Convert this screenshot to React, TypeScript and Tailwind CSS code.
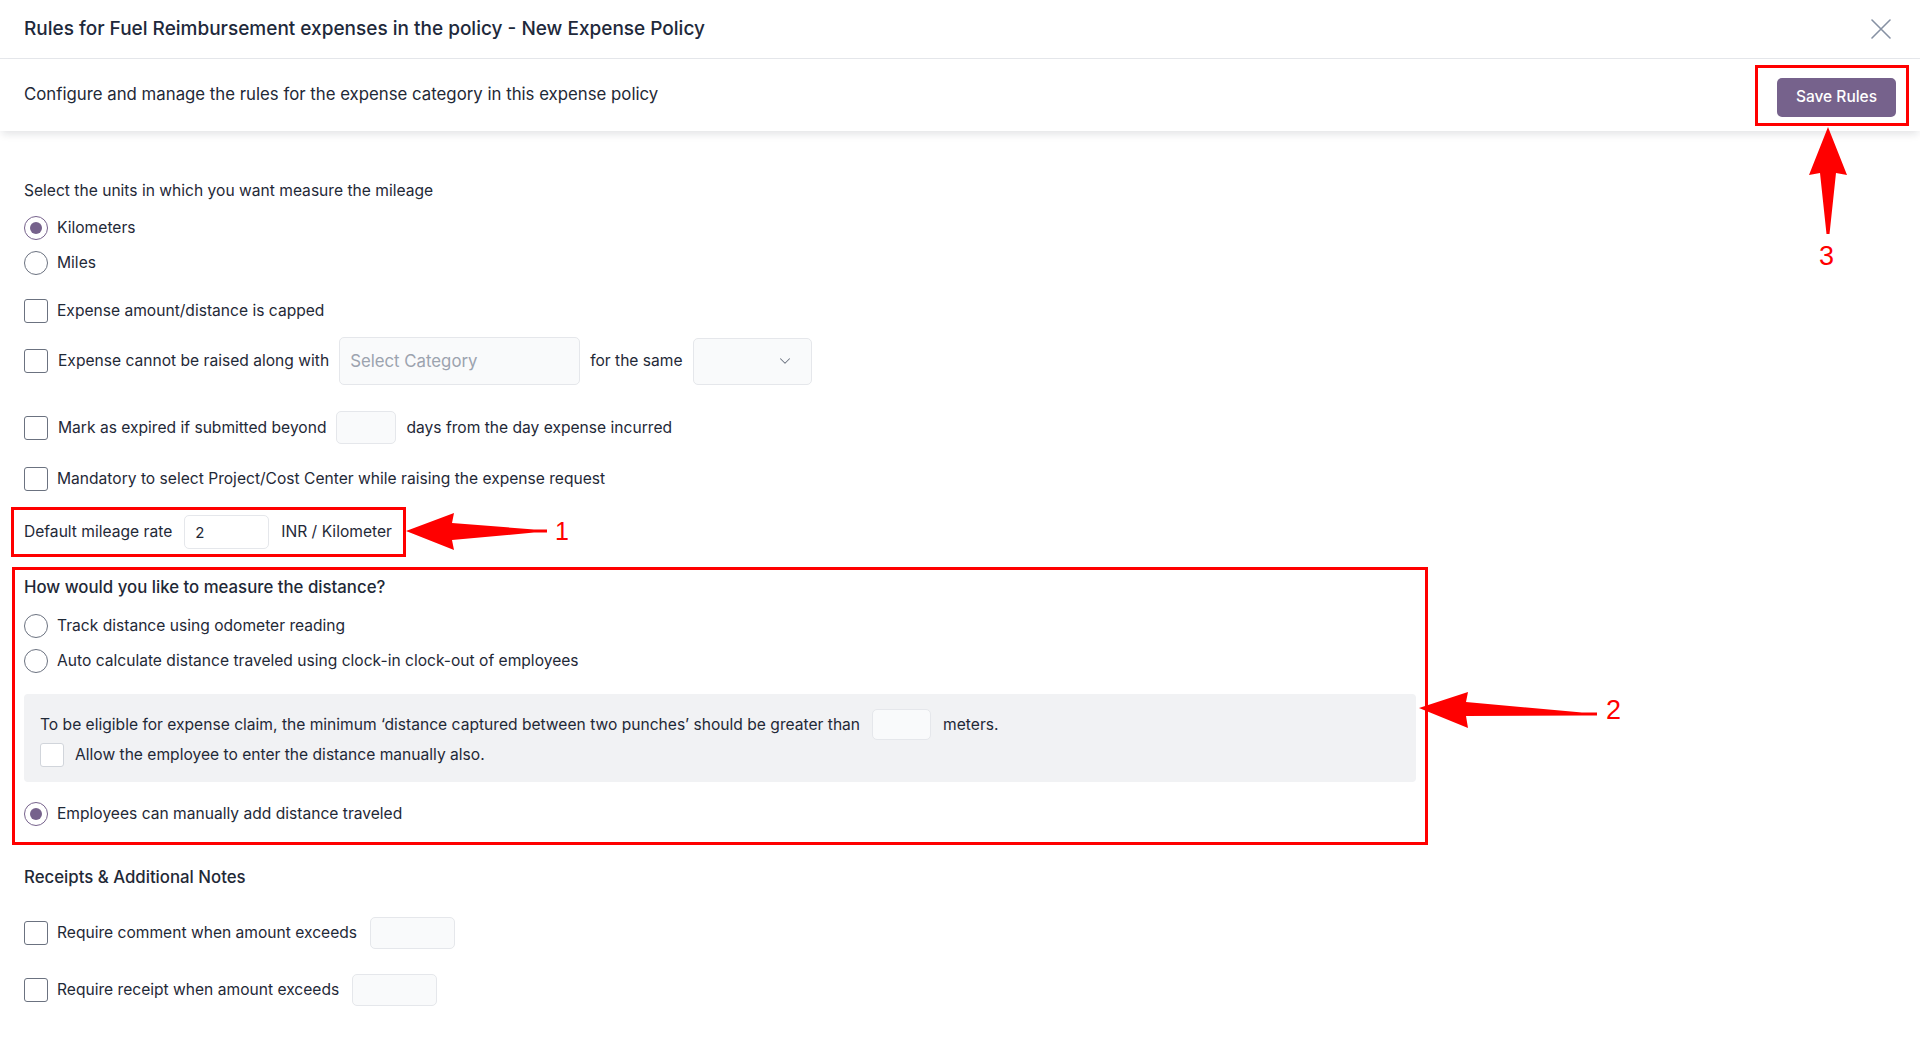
import React from 'react';
import { ChevronDown } from 'lucide-react';

const Checkbox: React.FC = () => (
  <span className="h-6 w-6 shrink-0 rounded-[3px] border border-[#6b7280] bg-white" />
);

const Radio: React.FC<{ checked?: boolean }> = ({ checked }) => (
  <span
    className={`flex h-6 w-6 shrink-0 items-center justify-center rounded-full border bg-white ${
      checked ? 'border-[#76628c]' : 'border-[#6b7280]'
    }`}
  >
    {checked && <span className="h-3 w-3 rounded-full bg-[#76628c]" />}
  </span>
);

const Option: React.FC<{ label: string; checked?: boolean; className?: string }> = ({ label, checked, className }) => (
  <label className={`flex h-6 items-center gap-[9px] ${className ?? ''}`}>
    <Radio checked={checked} />
    <span>{label}</span>
  </label>
);

const SmallInput: React.FC<{ className?: string }> = ({ className }) => (
  <input
    className={`rounded-[5px] border border-[#e5e7eb] bg-[#f9fafb] px-2.5 outline-none ${className ?? ''}`}
  />
);

const App: React.FC = () => {
  return (
    <div className="relative min-h-screen bg-white font-['Inter',sans-serif] text-[15.6px] text-[#1f2937]">
      {/* Title bar */}
      <div className="flex h-[59px] items-center justify-between border-b border-[#e5e7eb] pl-6 pr-[29px]">
        <h1 className="text-[19px] font-medium text-[#1e293b]">
          Rules for Fuel Reimbursement expenses in the policy - New Expense Policy
        </h1>
        <button className="text-[#8691a3]">
          <svg width="20" height="20" viewBox="0 0 20 20" fill="none" stroke="currentColor" strokeWidth="1.6" strokeLinecap="round">
            <path d="M1 1l18 18M19 1L1 19" />
          </svg>
        </button>
      </div>

      {/* Sub header */}
      <div className="relative z-10 flex h-[72px] items-center justify-between bg-white pl-6 pr-[11px] shadow-[0_5px_8px_-2px_rgba(15,23,42,0.12)]">
        <p className="text-[16.8px]">Configure and manage the rules for the expense category in this expense policy</p>
        <div className="border-[3px] border-[#ff0000] pb-[6px] pl-[19px] pr-[10px] pt-[10px]">
          <button className="h-[39px] w-[119px] rounded-[5px] bg-[#76628c] text-[15.5px] font-medium text-white">
            Save Rules
          </button>
        </div>
      </div>

      {/* Body */}
      <div className="flex flex-col items-start pl-6 pt-12">
        <p className="leading-6">Select the units in which you want measure the mileage</p>
        <Option label="Kilometers" checked className="mt-[13px]" />
        <Option label="Miles" className="mt-[11px]" />

        <label className="mt-6 flex h-6 items-center gap-[9px]">
          <Checkbox />
          <span>Expense amount/distance is capped</span>
        </label>

        <div className="mt-[14px] flex h-12 items-center gap-[10px]">
          <Checkbox />
          <span>Expense cannot be raised along with</span>
          <input
            placeholder="Select Category"
            className="h-12 w-[241px] rounded-[5px] border border-[#e5e7eb] bg-[#f9fafb] px-2.5 text-[16.8px] outline-none placeholder:text-[#9ca3af]"
          />
          <span>for the same</span>
          <div className="flex h-[47px] w-[119px] items-center justify-end rounded-[5px] border border-[#e5e7eb] bg-[#f9fafb] pr-[17px]">
            <ChevronDown size={18} strokeWidth={1.4} className="text-[#6b7280]" />
          </div>
        </div>

        <div className="mt-[26px] flex h-[33px] items-center gap-[10px]">
          <Checkbox />
          <span>Mark as expired if submitted beyond</span>
          <SmallInput className="h-[33px] w-[60px]" />
          <span>days from the day expense incurred</span>
        </div>

        <label className="mt-[23px] flex h-6 items-center gap-[9px]">
          <Checkbox />
          <span>Mandatory to select Project/Cost Center while raising the expense request</span>
        </label>

        {/* Annotated box 1 */}
        <div className="ml-[-13px] mt-4 flex items-center gap-3 border-[3px] border-[#ff0000] py-[5px] pl-[10px] pr-[11px]">
          <span>Default mileage rate</span>
          <input
            defaultValue="2"
            className="h-[34px] w-[85px] rounded-[5px] border border-[#e5e7eb] bg-white px-2.5 text-[15px] outline-none"
          />
          <span>INR / Kilometer</span>
        </div>

        {/* Annotated box 2 */}
        <div className="ml-[-12px] mt-[10px] flex w-[1416px] flex-col border-[3px] border-[#ff0000] pb-4 pl-[9px] pr-[9px] pt-[5px]">
          <p className="text-[16.8px] font-medium leading-6">How would you like to measure the distance?</p>
          <Option label="Track distance using odometer reading" className="mt-[15px]" />
          <Option label="Auto calculate distance traveled using clock-in clock-out of employees" className="mt-[11px]" />

          <div className="mt-[21px] flex flex-col rounded-[4px] bg-[#f1f2f4] pb-[15px] pl-4 pt-[15px]">
            <div className="flex h-[31px] items-center gap-3">
              <span>
                To be eligible for expense claim, the minimum ‘distance captured between two punches’ should be greater
                than
              </span>
              <SmallInput className="h-[31px] w-[59px]" />
              <span>meters.</span>
            </div>
            <label className="mt-[3px] flex h-6 items-center gap-[11px]">
              <span className="h-6 w-6 shrink-0 rounded-[3px] border border-[#d1d5db] bg-white" />
              <span>Allow the employee to enter the distance manually also.</span>
            </label>
          </div>

          <Option label="Employees can manually add distance traveled" checked className="mt-5" />
        </div>

        <p className="mt-5 text-[16.8px] font-medium leading-6">Receipts &amp; Additional Notes</p>

        <div className="mt-7 flex h-8 items-center gap-[13px]">
          <span className="flex items-center gap-[9px]">
            <Checkbox />
            <span>Require comment when amount exceeds</span>
          </span>
          <SmallInput className="h-8 w-[85px]" />
        </div>

        <div className="mt-[25px] flex h-8 items-center gap-[13px]">
          <span className="flex items-center gap-[9px]">
            <Checkbox />
            <span>Require receipt when amount exceeds</span>
          </span>
          <SmallInput className="h-8 w-[85px]" />
        </div>
      </div>

      {/* Annotation arrows */}
      <svg className="absolute left-[406px] top-[513px] z-20" width="142" height="37" viewBox="0 0 142 37">
        <polygon
          fill="#ff0000"
          points="0,18 48,0 46,10 128,16.5 141,16.5 141,19.5 128,19.5 46,27 48,37"
        />
      </svg>
      <span className="absolute left-[555px] top-[515px] z-20 font-['Liberation_Sans',sans-serif] text-[25px] leading-8 text-[#ff0000]">
        1
      </span>

      <svg className="absolute left-[1419px] top-[690px] z-20" width="180" height="38" viewBox="0 0 180 38">
        <polygon
          fill="#ff0000"
          points="0,18 49,2 47,12 163,22.5 178,22.5 178,25.5 163,25.5 47,26 49,38"
        />
      </svg>
      <span className="absolute left-[1606px] top-[694px] z-20 font-['Liberation_Sans',sans-serif] text-[27px] leading-8 text-[#ff0000]">
        2
      </span>

      <svg className="absolute left-[1809px] top-[127px] z-20" width="38" height="108" viewBox="0 0 38 108">
        <polygon fill="#ff0000" points="19,0 38,48 27,46 20.5,107 17.5,107 11,46 0,48" />
      </svg>
      <span className="absolute left-[1819px] top-[240px] z-20 font-['Liberation_Sans',sans-serif] text-[27px] leading-8 text-[#ff0000]">
        3
      </span>
    </div>
  );
};

export default App;
